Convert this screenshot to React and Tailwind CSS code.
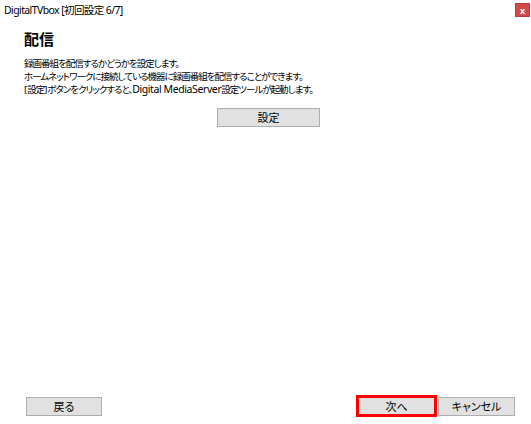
export default function App() {
  const font = { fontFamily: '"Noto Sans", "Noto Sans CJK JP", sans-serif' };
  return (
    <div
      className="w-[531px] h-[424px] bg-white text-black flex flex-col overflow-hidden [font-feature-settings:'palt']"
      style={font}
    >
      {/* title bar */}
      <div className="h-[22px] flex items-start justify-between pl-[4px] pr-[1px] pt-[2px]">
        <span className="text-[10.5px] leading-[16px] tracking-[-0.6px]">DigitalTVbox [初回設定 6/7]</span>
        <div className="w-[15px] h-[14px] mt-[1px] bg-[#d44a4a] border border-[#c03838] flex items-center justify-center text-white text-[9px] font-bold leading-none">
          x
        </div>
      </div>

      {/* body */}
      <div className="flex-1 flex flex-col px-[24px]">
        <h1 className="text-[15px] font-bold leading-[20px] mt-[7px]">配信</h1>
        <div className="mt-[8px] text-[9.5px] leading-[13px] tracking-[-1px]">
          <p>録画番組を配信するかどうかを設定します。</p>
          <p>ホームネットワークに接続している機器に録画番組を配信することができます。</p>
          <p>
            <span className="tracking-[0px]">[</span>設定<span className="tracking-[0px]">]</span>
            ボタンをクリックすると、<span className="text-[10.5px] tracking-[-0.4px]">Digital MediaServer</span>設定ツールが起動します。
          </p>
        </div>
        <div className="mt-[8px] pl-[193px]">
          <button className="w-[103px] h-[19px] bg-[#e1e1e1] border border-[#adadad] text-[11px] leading-none">
            設定
          </button>
        </div>
      </div>

      {/* footer */}
      <div className="h-[29px] flex items-start pl-[26px] pr-[16px]">
        <button className="mt-[2px] w-[76px] h-[19px] bg-[#e1e1e1] border border-[#adadad] text-[11px] leading-none">
          戻る
        </button>
        <div className="ml-auto border-[3px] border-[#ff0000]">
          <button className="block w-[75px] h-[16px] bg-[#e1e1e1] text-[11px] leading-none">次へ</button>
        </div>
        <button className="ml-[1px] mt-[2px] w-[77px] h-[19px] bg-[#e1e1e1] border border-[#adadad] text-[11px] leading-none">
          キャンセル
        </button>
      </div>
    </div>
  );
}
